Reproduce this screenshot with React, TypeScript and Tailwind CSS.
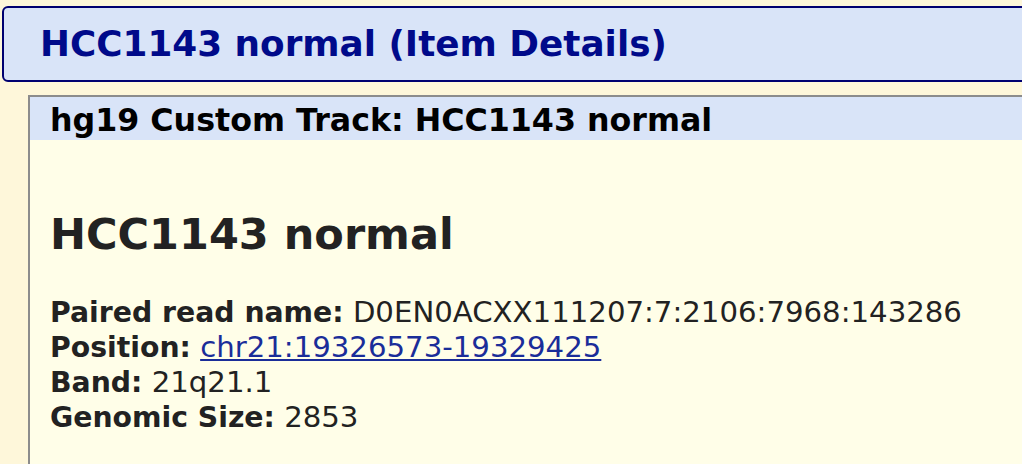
import React from 'react'

const details = [
  { label: 'Paired read name:', value: 'D0EN0ACXX111207:7:2106:7968:143286' },
  { label: 'Position:', value: 'chr21:19326573-19329425', link: true },
  { label: 'Band:', value: '21q21.1' },
  { label: 'Genomic Size:', value: '2853' },
]

export default function App() {
  return (
    <div
      className="w-[1022px] h-[464px] overflow-hidden bg-[#FEF7DA] pt-[6px]"
      style={{ fontFamily: '"DejaVu Sans", Verdana, sans-serif' }}
    >
      {/* Page title */}
      <div className="ml-[2px] w-[1060px] h-[76px] rounded-[6px] border-2 border-[#000070] bg-[#D9E4F8] pl-[36px]">
        <h1 className="text-[35.8px] leading-[72px] font-bold text-[#000A8A] whitespace-nowrap">
          HCC1143 normal (Item Details)
        </h1>
      </div>

      {/* Track section */}
      <div className="ml-[28px] mt-[13px] w-[1060px] h-[400px] border-l-2 border-t-2 border-[#8C8C8C] bg-[#FFFEE8]">
        <div className="h-[43px] bg-[#D9E4F8] pl-[20px] pt-[3px]">
          <h2 className="text-[31.7px] leading-[40px] font-bold text-black whitespace-nowrap">
            hg19 Custom Track: HCC1143 normal
          </h2>
        </div>
        <div className="pl-[20px] text-[#222222]">
          <h3 className="mt-[70px] text-[43px] leading-[48px] font-bold whitespace-nowrap">HCC1143 normal</h3>
          <div className="mt-[37px] text-[29.2px] leading-[35px]">
            {details.map((d) => (
              <div key={d.label} className="whitespace-nowrap">
                <span className="font-bold text-[28.3px]">{d.label}</span>{' '}
                {d.link ? (
                  <a href="#" className="text-[#1A2D99] underline">
                    {d.value}
                  </a>
                ) : (
                  <span>{d.value}</span>
                )}
              </div>
            ))}
          </div>
        </div>
      </div>
    </div>
  )
}
